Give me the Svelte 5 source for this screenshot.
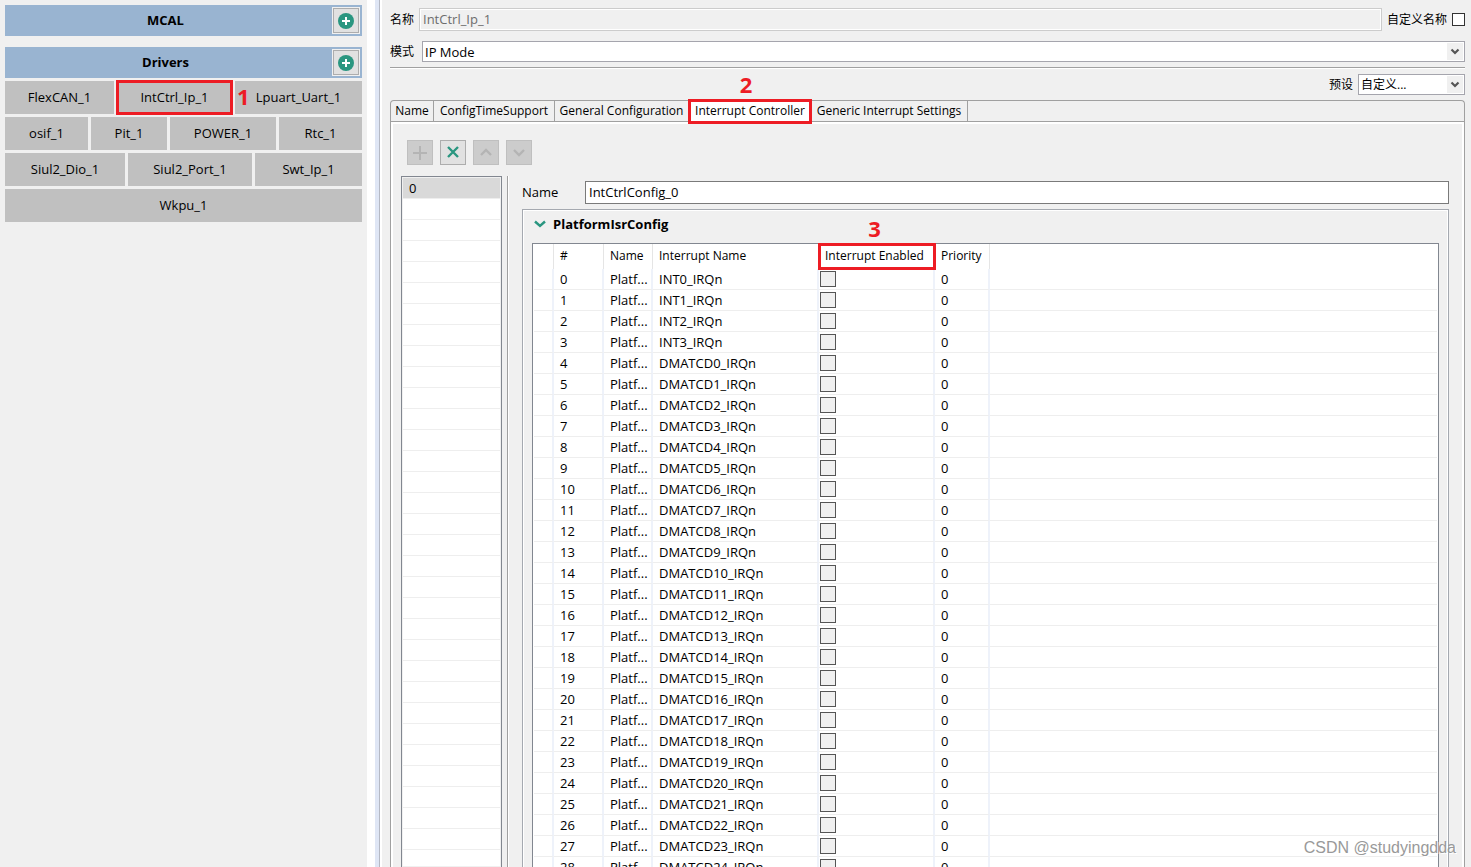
<script lang="ts">
  const driverRows = [
    [
      { name: 'FlexCAN_1', size: 109 },
      { name: 'IntCtrl_Ip_1', size: 115, marked: true },
      { name: 'Lpuart_Uart_1', size: 127 }
    ],
    [
      { name: 'osif_1', size: 83 },
      { name: 'Pit_1', size: 76 },
      { name: 'POWER_1', size: 106 },
      { name: 'Rtc_1', size: 83 }
    ],
    [
      { name: 'Siul2_Dio_1', size: 120 },
      { name: 'Siul2_Port_1', size: 124 },
      { name: 'Swt_Ip_1', size: 107 }
    ],
    [{ name: 'Wkpu_1', size: 1 }]
  ]

  const tabs = [
    { label: 'Name', width: 43 },
    { label: 'ConfigTimeSupport', width: 121 },
    { label: 'General Configuration', width: 134 },
    { label: 'Interrupt Controller', width: 122 },
    { label: 'Generic Interrupt Settings', width: 157 }
  ]
  let activeTab = $state('Interrupt Controller')

  const interrupts = Array.from({ length: 32 }, (_, i) => ({
    name: i < 4 ? `INT${i}_IRQn` : `DMATCD${i - 4}_IRQn`,
    enabled: false,
    priority: 0
  }))
  let rows = $state(interrupts)

  let mode = $state('IP Mode')
  let preset = $state('自定义...')
  let configName = $state('IntCtrlConfig_0')
</script>

{#snippet arrow()}
  <svg class="arrow" viewBox="0 0 16 17" aria-hidden="true">
    <path d="M4.500 6.500 8 10l3.500-3.500" fill="none" stroke="#555" stroke-width="2.200" />
  </svg>
{/snippet}

{#snippet groupHeader(title: string)}
  <div class="group-header">
    <h2>{title}</h2>
    <button class="add" aria-label="Add to {title}">
      <svg viewBox="0 0 16 16" width="16" height="16">
        <circle cx="8" cy="8" r="8" fill="#2a9680" />
        <path d="M8 4v8M4 8h8" stroke="#fff" stroke-width="2" />
      </svg>
    </button>
  </div>
{/snippet}

<div class="app">
  <aside>
    {@render groupHeader('MCAL')}
    <section>
      {@render groupHeader('Drivers')}
      {#each driverRows as row}
        <div class="driver-row">
          {#each row as driver}
            <button class="driver" class:marked={driver.marked} style="flex-grow: {driver.size}">
              {driver.name}
              {#if driver.marked}<b class="step step-1">1</b>{/if}
            </button>
          {/each}
        </div>
      {/each}
    </section>
  </aside>

  <div class="splitter"></div>

  <main>
    <div class="field-row name-row">
      <label for="component-name">名称</label>
      <input id="component-name" type="text" value="IntCtrl_Ip_1" disabled />
      <label for="custom-name">自定义名称</label>
      <input id="custom-name" type="checkbox" />
    </div>
    <div class="field-row mode-row">
      <label for="mode">模式</label>
      <div class="select">
        <select id="mode" bind:value={mode}>
          <option>IP Mode</option>
        </select>
        {@render arrow()}
      </div>
    </div>
    <div class="field-row preset-row">
      <label for="preset">预设</label>
      <div class="select">
        <select id="preset" bind:value={preset}>
          <option>自定义...</option>
        </select>
        {@render arrow()}
      </div>
    </div>

    <div class="tab-folder">
      <div class="tabs" role="tablist">
        {#each tabs as tab}
          <button
            role="tab"
            aria-selected={tab.label === activeTab}
            class:active={tab.label === activeTab}
            style="width: {tab.width}px"
            onclick={() => (activeTab = tab.label)}
          >
            {tab.label}
            {#if tab.label === 'Interrupt Controller'}<b class="step step-2">2</b>{/if}
          </button>
        {/each}
      </div>

      <div class="tab-body">
        <div class="toolbar">
          <button aria-label="Add" disabled>
            <svg viewBox="0 0 24 23"><path d="M12 5v14M5 12h14" /></svg>
          </button>
          <button aria-label="Remove">
            <svg viewBox="0 0 24 23"><path class="bold" d="m7 6 10 10M17 6 7 16" /></svg>
          </button>
          <button aria-label="Move up" disabled>
            <svg viewBox="0 0 24 23"><path class="bold" d="m7 14 5-5 5 5" /></svg>
          </button>
          <button aria-label="Move down" disabled>
            <svg viewBox="0 0 24 23"><path class="bold" d="m7 9 5 5 5-5" /></svg>
          </button>
        </div>

        <div class="content">
          <ul class="config-list">
            <li class="selected">0</li>
          </ul>

          <div class="detail">
            <div class="config-name">
              <label for="config-name">Name</label>
              <input id="config-name" type="text" bind:value={configName} />
            </div>

            <section class="isr-config">
              <h3>
                <svg viewBox="0 0 12 8" width="12" height="8" aria-hidden="true">
                  <path d="m1 1.500 5 4.500 5-4.500" fill="none" stroke="#2a9680" stroke-width="2.400" />
                </svg>
                PlatformIsrConfig
              </h3>
              <div class="table-frame">
                <table>
                  <colgroup>
                    <col class="c-blank" />
                    <col class="c-index" />
                    <col class="c-name" />
                    <col class="c-irq" />
                    <col class="c-enabled" />
                    <col class="c-priority" />
                    <col />
                  </colgroup>
                  <thead>
                    <tr>
                      <th></th>
                      <th>#</th>
                      <th>Name</th>
                      <th>Interrupt Name</th>
                      <th class="enabled-head">
                        <span>Interrupt Enabled</span>
                        <b class="step step-3">3</b>
                      </th>
                      <th>Priority</th>
                      <th></th>
                    </tr>
                  </thead>
                  <tbody>
                    {#each rows as row, i}
                      <tr>
                        <td></td>
                        <td>{i}</td>
                        <td>Platf...</td>
                        <td>{row.name}</td>
                        <td class="check">
                          <input type="checkbox" aria-label="Enable {row.name}" bind:checked={row.enabled} />
                        </td>
                        <td>{row.priority}</td>
                        <td></td>
                      </tr>
                    {/each}
                  </tbody>
                </table>
              </div>
            </section>
          </div>
        </div>
      </div>
    </div>
  </main>

  <div class="watermark">CSDN @studyingdda</div>
</div>

<style>
  :global(body) {
    margin: 0;
    background: #f0f0f0;
  }

  .app {
    position: relative;
    display: flex;
    height: 100vh;
    overflow: hidden;
    background: #f0f0f0;
    color: #000;
    font: 13px/20px 'Open Sans', 'Noto Sans CJK SC', sans-serif;
  }

  .app * {
    box-sizing: border-box;
  }

  button,
  input,
  select {
    margin: 0;
    font: inherit;
    color: inherit;
    border-radius: 0;
  }

  h2,
  h3 {
    margin: 0;
    font-size: 13px;
    font-weight: 700;
  }

  /* component list */
  aside {
    flex: 0 0 25%;
    max-width: 367px;
    padding: 5px;
    display: flex;
    flex-direction: column;
    gap: 11px;
  }

  section {
    display: flex;
    flex-direction: column;
    gap: 3px;
  }

  .group-header {
    display: flex;
    align-items: center;
    height: 31px;
    padding-right: 2px;
    background: #99b4d1;
  }

  .group-header h2 {
    flex: 1;
    padding: 0 6px 2px 0;
    text-align: center;
  }

  .add {
    display: grid;
    place-items: center;
    width: 28px;
    height: 27px;
    padding: 0;
    border: 1px solid #f0f0f0;
    background: #e1e1e1;
    box-shadow: inset 0 0 0 1px #adadad;
  }

  .driver-row {
    display: flex;
    gap: 3px;
  }

  .driver {
    position: relative;
    flex: 1 1 0;
    height: 33px;
    padding: 0 0 2px;
    border: 0;
    background: #c0c0c0;
    white-space: nowrap;
  }

  .marked {
    z-index: 1;
    outline: 3px solid #ed1c24;
    outline-offset: -2px;
  }

  .step {
    position: absolute;
    color: #ed1c24;
    font-size: 22px;
    line-height: 24px;
  }

  .step-1 {
    left: 100%;
    top: 3px;
    padding-left: 5px;
  }

  .step-2 {
    bottom: 100%;
    left: 0;
    right: 8px;
    padding-bottom: 4px;
  }

  .step-3 {
    bottom: 100%;
    left: 0;
    right: 4px;
    padding-bottom: 4px;
    text-align: center;
  }

  .splitter {
    flex: 0 0 15px;
    background: linear-gradient(
      to right,
      #fff 8px,
      #dfe6f5 8px 12px,
      #b5b9c4 12px 13px,
      #fff 13px
    );
  }

  main {
    flex: 1;
    min-width: 0;
    padding: 8px 6px 0 8px;
    display: flex;
    flex-direction: column;
  }

  /* component header */
  .field-row {
    flex: none;
    display: flex;
    align-items: center;
  }

  .field-row label {
    font-size: 12px;
    white-space: nowrap;
  }

  .name-row {
    gap: 5px;
  }

  .name-row input[type='text'] {
    flex: 1;
    min-width: 0;
    height: 23px;
    padding: 0 3px 1px;
    border: 1px solid #ccc;
    box-shadow: inset 0 0 0 1px #fff;
    background: #f0f0f0;
    color: #6d6d6d;
  }

  input[type='checkbox'] {
    appearance: none;
    flex: none;
    width: 13px;
    height: 13px;
    border: 1px solid #333;
    background: #fff;
  }

  .mode-row {
    gap: 8px;
    margin-top: 10px;
    padding-bottom: 5px;
    border-bottom: 1px solid #a0a0a0;
    box-shadow: 0 1px #fff;
  }

  .preset-row {
    gap: 5px;
    justify-content: flex-end;
    margin-top: 6px;
  }

  .select {
    position: relative;
    flex: 1;
    display: flex;
  }

  .preset-row .select {
    flex: 0 0 107px;
  }

  select {
    appearance: none;
    width: 100%;
    height: 21px;
    padding: 0 20px 2px 2px;
    border: 1px solid #a5a5ad;
    background: #fff;
  }

  .preset-row select {
    padding-bottom: 0;
    font-size: 12px;
  }

  .arrow {
    position: absolute;
    top: 2px;
    right: 2px;
    width: 16px;
    height: 17px;
    background: #f0f0f0;
    pointer-events: none;
  }

  /* tab folder */
  .tab-folder {
    flex: 1;
    min-height: 0;
    display: flex;
    flex-direction: column;
    margin-top: 5px;
    border: 1px solid #a0a0a0;
    border-bottom: 0;
    border-radius: 4px 4px 0 0;
  }

  .tabs {
    flex: none;
    display: flex;
    height: 21px;
    border-bottom: 1px solid #a0a0a0;
    font-size: 12px;
  }

  .tabs button {
    position: relative;
    padding: 0;
    border: 0;
    border-right: 1px solid #a0a0a0;
    background: none;
    text-align: center;
    line-height: 20px;
    white-space: nowrap;
  }

  .tabs .active {
    z-index: 1;
    height: 23px;
    margin-top: -1px;
    padding-bottom: 1px;
    border: 0;
    background: #fff;
    outline: 3px solid #ed1c24;
    outline-offset: -2px;
  }

  .tab-body {
    flex: 1;
    min-height: 0;
    display: flex;
    flex-direction: column;
    border: 2px solid #fff;
    border-bottom: 0;
    padding: 16px 13px 0 8px;
  }

  .toolbar {
    flex: none;
    display: flex;
    gap: 7px;
    padding-left: 6px;
  }

  .toolbar button {
    width: 26px;
    height: 25px;
    padding: 0;
    border: 1px solid #adadad;
    background: #e1e1e1;
  }

  .toolbar button:disabled {
    border-color: #bfbfbf;
    background: #ccc;
  }

  .toolbar svg {
    display: block;
    width: 24px;
    height: 23px;
    fill: none;
    stroke: #2a9680;
    stroke-width: 2;
  }

  .toolbar .bold {
    stroke-width: 2.4;
  }

  .toolbar button:disabled svg {
    stroke: #b4b4b4;
  }

  .content {
    flex: 1;
    min-height: 0;
    display: flex;
    gap: 5px;
    margin-top: 11px;
  }

  .config-list {
    flex: 0 0 101px;
    margin: 0;
    padding: 1px;
    border: 1px solid #828790;
    border-bottom: 0;
    list-style: none;
    background: repeating-linear-gradient(#fff 0 20px, #eee 20px 21px) content-box #fff;
  }

  .config-list li {
    height: 21px;
    padding-left: 6px;
    border-bottom: 1px solid #eee;
  }

  .config-list .selected {
    background: #d9d9d9;
  }

  .detail {
    flex: 1;
    min-width: 0;
    display: flex;
    flex-direction: column;
    gap: 5px;
    padding: 5px 0 0 14px;
    border-left: 1px solid #a0a0a0;
    box-shadow: inset 1px 0 #fff;
  }

  .config-name {
    flex: none;
    display: flex;
    align-items: center;
  }

  .config-name label {
    flex: 0 0 63px;
    padding-bottom: 1px;
  }

  .config-name input {
    flex: 1;
    min-width: 0;
    height: 23px;
    padding: 0 3px 1px;
    border: 1px solid #7a7a7a;
    background: #fff;
  }

  .isr-config {
    flex: 1;
    min-height: 0;
    gap: 9px;
    padding: 4px 9px 0;
    border: 1px solid #a5a9b0;
    border-bottom: 0;
    box-shadow: inset 1px 1px #fff, inset -1px 0 #fff;
  }

  h3 {
    flex: none;
    display: flex;
    align-items: center;
    gap: 7px;
    height: 20px;
    padding-left: 2px;
  }

  .table-frame {
    flex: 1 0 auto;
    padding: 0 1px;
    border: 1px solid #828790;
    background: #fff;
  }

  table {
    width: 100%;
    table-layout: fixed;
    border-collapse: separate;
    border-spacing: 0;
  }

  .c-blank {
    width: 20px;
  }

  .c-index {
    width: 50px;
  }

  .c-name {
    width: 49px;
  }

  .c-irq {
    width: 166px;
  }

  .c-enabled {
    width: 116px;
  }

  .c-priority {
    width: 55px;
  }

  th {
    height: 25px;
    padding: 0 0 1px 6px;
    border-right: 1px solid #e5e5e5;
    font-size: 12px;
    font-weight: 400;
    text-align: left;
    white-space: nowrap;
  }

  td {
    height: 21px;
    padding: 0 0 0 6px;
    border-right: 2px solid #eef2fa;
    border-bottom: 1px solid #eee;
    white-space: nowrap;
  }

  th:last-child,
  td:last-child {
    border-right: 0;
  }

  .enabled-head {
    position: relative;
    outline: 3px solid #ed1c24;
    outline-offset: -2px;
  }

  td.check {
    padding: 0 0 0 1px;
  }

  .check input {
    display: block;
    width: 16px;
    height: 16px;
    border-color: #555;
    background: #f0f0f0;
  }

  input[type='checkbox']:checked {
    background: #2a9680;
  }

  .watermark {
    position: absolute;
    right: 15px;
    bottom: 8px;
    color: #999;
    font: 16px/22px 'Liberation Sans', sans-serif;
    text-shadow: 1px 1px #fff;
  }
</style>
